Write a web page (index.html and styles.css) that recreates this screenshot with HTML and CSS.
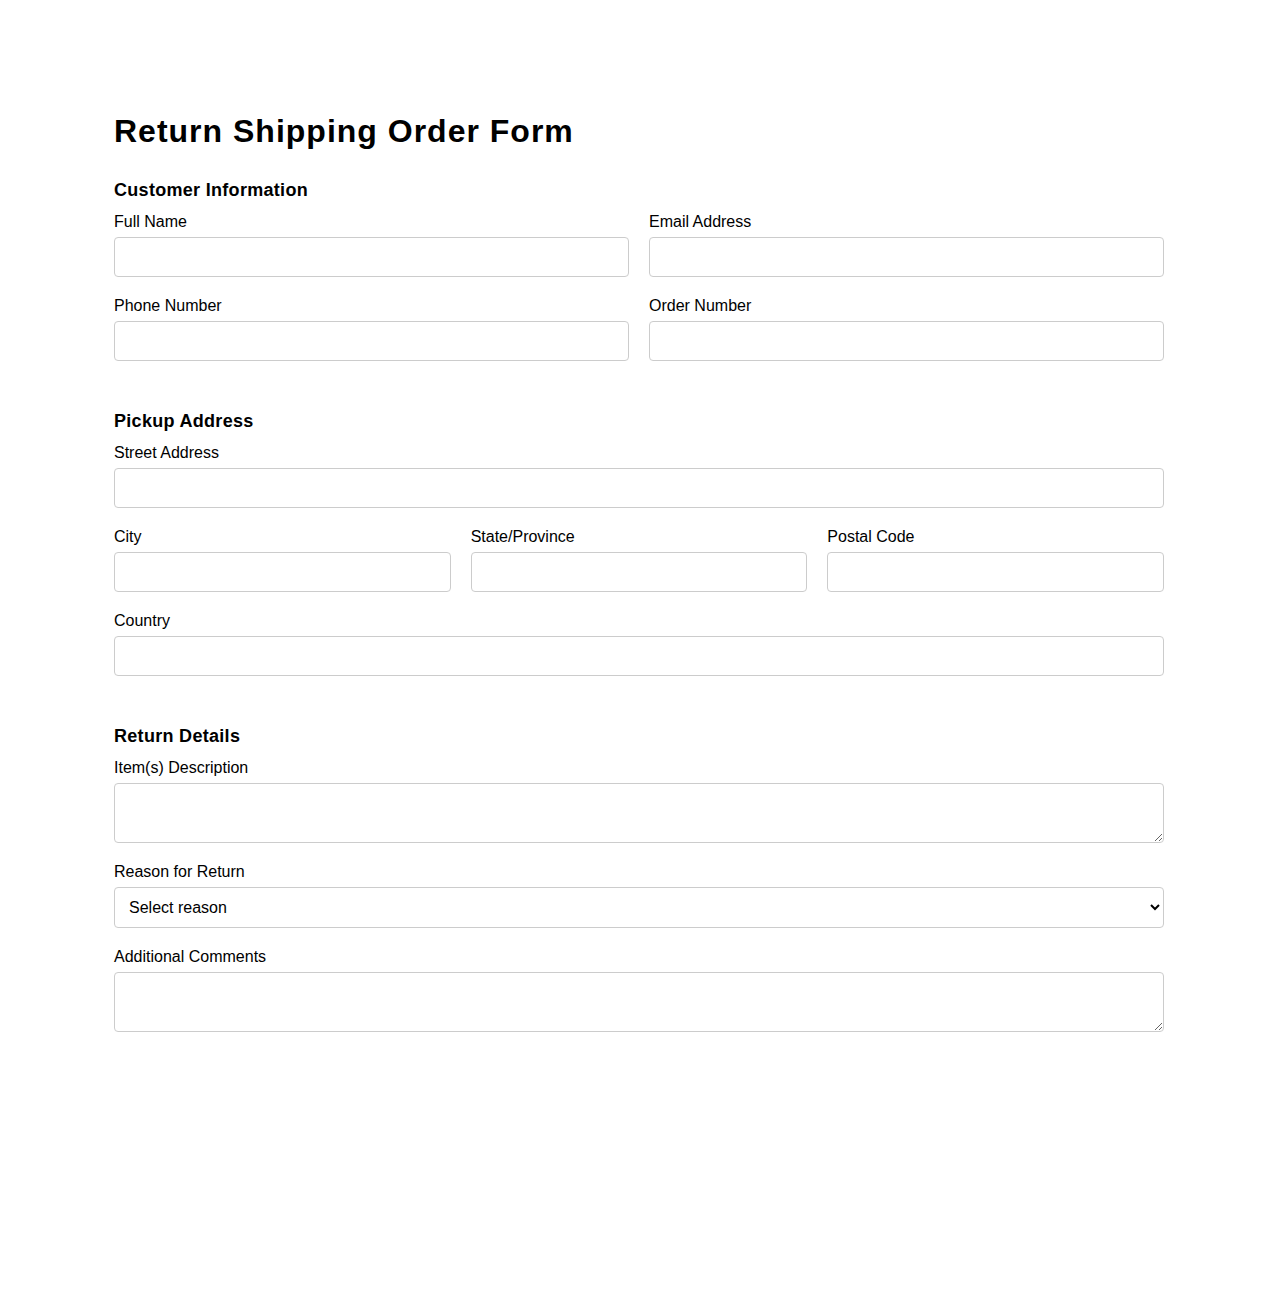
FILE: index.html
```html
<!DOCTYPE html>
<html lang="en">
<head>
    <meta charset="UTF-8">
    <meta name="viewport" content="width=device-width, initial-scale=1.0">
    <title>Return Shipping Order Form</title>
    <link rel="stylesheet" href="styles.css">
</head>
<body>
    <div class="form-container">
        <h1 class="title">Return Shipping Order Form</h1>

        <form>
            <!-- Customer -->
            <div class="section">
                <h2 class="section-title">Customer Information</h2>
                <div class="row two">
                    <div class="field">
                        <label for="fullName">Full Name</label>
                        <input type="text" id="fullName">
                    </div>
                    <div class="field">
                        <label for="email">Email Address</label>
                        <input type="email" id="email">
                    </div>
                </div>
                <div class="row two">
                    <div class="field">
                        <label for="phone">Phone Number</label>
                        <input type="tel" id="phone">
                    </div>
                    <div class="field">
                        <label for="orderNo">Order Number</label>
                        <input type="text" id="orderNo">
                    </div>
                </div>
            </div>

            <!-- Pickup -->
            <div class="section">
                <h2 class="section-title">Pickup Address</h2>
                <div class="field">
                    <label for="street">Street Address</label>
                    <input type="text" id="street">
                </div>
                <div class="row three">
                    <div class="field">
                        <label for="city">City</label>
                        <input type="text" id="city">
                    </div>
                    <div class="field">
                        <label for="state">State/Province</label>
                        <input type="text" id="state">
                    </div>
                    <div class="field">
                        <label for="postal">Postal Code</label>
                        <input type="text" id="postal">
                    </div>
                </div>
                <div class="field">
                    <label for="country">Country</label>
                    <input type="text" id="country">
                </div>
            </div>

            <!-- Return -->
            <div class="section">
                <h2 class="section-title">Return Details</h2>
                <div class="field">
                    <label for="items">Item(s) Description</label>
                    <textarea id="items"></textarea>
                </div>
                <div class="field">
                    <label for="reason">Reason for Return</label>
                    <select id="reason">
                        <option>Select reason</option>
                        <option>Damaged item</option>
                        <option>Wrong item</option>
                        <option>No longer needed</option>
                        <option>Other</option>
                    </select>
                </div>
                <div class="field">
                    <label for="comments">Additional Comments</label>
                    <textarea id="comments"></textarea>
                </div>
            </div>
        </form>
    </div>
</body>
</html>
```

FILE: styles.css
```css
* {
    margin: 0;
    padding: 0;
    box-sizing: border-box;
}

body {
    font-family: "Liberation Sans", Arial, sans-serif;
    background: #ffffff;
    color: #000000;
}

.form-container {
    max-width: 1050px;
    margin: 0 auto;
    padding: 113px 0 60px;
}

.title {
    font-size: 32px;
    font-weight: bold;
    letter-spacing: 1px;
    line-height: 37px;
    margin-bottom: 30px;
}

.section {
    padding-bottom: 30px;
}

.section-title {
    font-size: 18px;
    font-weight: bold;
    letter-spacing: 0.3px;
    line-height: 21px;
    margin-bottom: 12px;
}

.row {
    display: grid;
    gap: 20px;
}

.row.two {
    grid-template-columns: 1fr 1fr;
}

.row.three {
    grid-template-columns: 1fr 1fr 1fr;
}

.field {
    margin-bottom: 20px;
}

.field label {
    display: block;
    font-size: 16px;
    line-height: 18px;
    margin-bottom: 6px;
}

.field input,
.field select,
.field textarea {
    display: block;
    width: 100%;
    font-family: "Liberation Sans", Arial, sans-serif;
    font-size: 16px;
    border: 1px solid #cccccc;
    border-radius: 4px;
    background: #ffffff;
    color: #000000;
}

.field input {
    height: 40px;
    padding: 10px;
}

.field select {
    height: 41px;
    padding: 0 10px;
}

.field textarea {
    height: 60px;
    padding: 10px;
    resize: vertical;
}
```
